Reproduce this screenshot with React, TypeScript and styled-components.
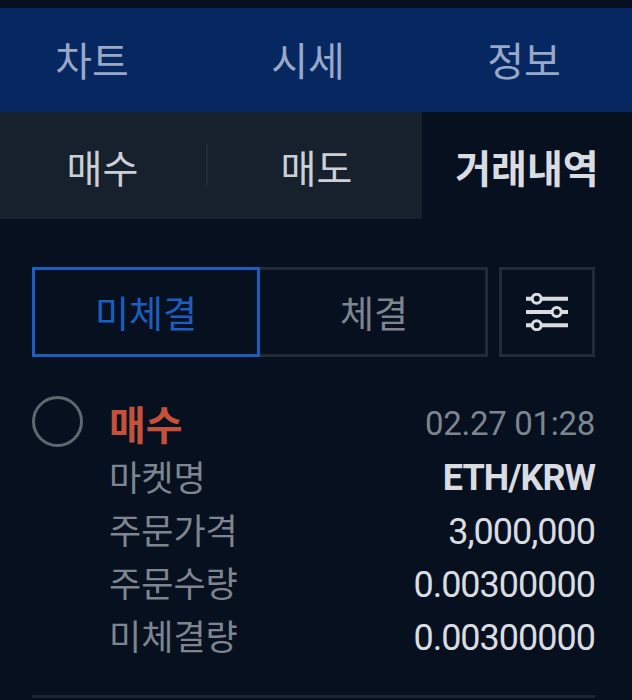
import React, { FC } from 'react';
import styled, { createGlobalStyle } from 'styled-components';

const GlobalStyle = createGlobalStyle`
  html, body {
    margin: 0;
    padding: 0;
    background: #06101f;
  }
  * {
    box-sizing: border-box;
  }
`;

const Page = styled.div`
  width: 632px;
  height: 700px;
  overflow: hidden;
  padding-top: 8px;
  background: #06101f;
  font-family: Roboto, 'Noto Sans CJK KR', sans-serif;
`;

const TopBar = styled.nav`
  display: grid;
  grid-template-columns: 184px 248px 184px;
  height: 104px;
  padding-right: 16px;
  background: #062760;
`;

const TopTab = styled.div`
  display: flex;
  align-items: center;
  justify-content: center;
  padding-bottom: 2px;
  font-size: 40px;
  color: #98a8c8;
`;

const SubBar = styled.div`
  display: grid;
  grid-template-columns: 211px 211px 210px;
  height: 107px;
`;

const SubTab = styled.div<{ $active?: boolean; $divider?: boolean }>`
  position: relative;
  display: flex;
  align-items: center;
  justify-content: center;
  padding-right: ${(p) => (p.$divider ? '6px' : '0')};
  font-size: 39px;
  font-weight: ${(p) => (p.$active ? 700 : 400)};
  color: ${(p) => (p.$active ? '#d9dce1' : '#ccd0d6')};
  background: ${(p) => (p.$active ? '#06101f' : '#17212e')};
  &::after {
    content: '';
    display: ${(p) => (p.$divider ? 'block' : 'none')};
    position: absolute;
    right: 3px;
    top: 32px;
    width: 2px;
    height: 41px;
    background: #222c39;
  }
`;

const Content = styled.div`
  padding: 48px 37px 0 32px;
`;

const FilterRow = styled.div`
  display: flex;
  height: 90px;
`;

const SegmentButton = styled.div<{ $active?: boolean }>`
  display: flex;
  align-items: center;
  justify-content: center;
  width: 228px;
  padding-left: ${(p) => (p.$active ? '0' : '3px')};
  font-size: 37px;
  color: ${(p) => (p.$active ? '#1a5fc0' : '#7e858f')};
  border: 3px solid ${(p) => (p.$active ? '#1a5fc0' : '#222c39')};
  border-left-width: ${(p) => (p.$active ? '3px' : '0')};
`;

const SettingsButton = styled.div`
  display: flex;
  align-items: center;
  justify-content: center;
  width: 96px;
  margin-left: 11px;
  border: 3px solid #222c39;
`;

const Order = styled.div`
  display: flex;
  margin-top: 39px;
`;

const StatusCircle = styled.div`
  flex: none;
  width: 51px;
  height: 51px;
  border: 3px solid #5f6770;
  border-radius: 50%;
`;

const OrderBody = styled.div`
  flex: 1;
  margin-left: 26px;
`;

const OrderHead = styled.div`
  display: flex;
  align-items: center;
  justify-content: space-between;
  height: 54px;
`;

const Side = styled.div`
  font-size: 40px;
  font-weight: 700;
  color: #c4513a;
`;

const Time = styled.div`
  font-size: 33px;
  letter-spacing: -0.3px;
  color: #7e858f;
`;

const Row = styled.div`
  display: flex;
  align-items: center;
  justify-content: space-between;
  height: 53px;
`;

const RowLabel = styled.div`
  font-size: 35px;
  margin-bottom: 2px;
  color: #7e858f;
`;

const RowValue = styled.div<{ $bold?: boolean }>`
  margin-top: ${(p) => (p.$bold ? '2px' : '4px')};
  font-size: 36px;
  font-weight: ${(p) => (p.$bold ? 700 : 400)};
  color: #d9dce1;
  letter-spacing: -1px;
`;

const Divider = styled.div`
  height: 3px;
  margin-top: 33px;
  background: #1a2431;
`;

const SlidersIcon: FC = () => (
  <svg width="42" height="38" viewBox="0 0 42 38" fill="none">
    <path d="M0 5.800h42M0 19h42M0 32.200h42" stroke="#d9dce1" strokeWidth="4" />
    <circle cx="10.700" cy="5.800" r="4.500" fill="#06101f" stroke="#d9dce1" strokeWidth="3" />
    <circle cx="30.700" cy="19" r="4.500" fill="#06101f" stroke="#d9dce1" strokeWidth="3" />
    <circle cx="10.700" cy="32.200" r="4.500" fill="#06101f" stroke="#d9dce1" strokeWidth="3" />
  </svg>
);

const rows = [
  { label: '마켓명', value: 'ETH/KRW', bold: true },
  { label: '주문가격', value: '3,000,000' },
  { label: '주문수량', value: '0.00300000' },
  { label: '미체결량', value: '0.00300000' },
];

const App: FC = () => (
  <Page>
    <GlobalStyle />
    <TopBar>
      <TopTab>차트</TopTab>
      <TopTab>시세</TopTab>
      <TopTab>정보</TopTab>
    </TopBar>
    <SubBar>
      <SubTab $divider>매수</SubTab>
      <SubTab>매도</SubTab>
      <SubTab $active>거래내역</SubTab>
    </SubBar>
    <Content>
      <FilterRow>
        <SegmentButton $active>미체결</SegmentButton>
        <SegmentButton>체결</SegmentButton>
        <SettingsButton>
          <SlidersIcon />
        </SettingsButton>
      </FilterRow>
      <Order>
        <StatusCircle />
        <OrderBody>
          <OrderHead>
            <Side>매수</Side>
            <Time>02.27 01:28</Time>
          </OrderHead>
          {rows.map((row) => (
            <Row key={row.label}>
              <RowLabel>{row.label}</RowLabel>
              <RowValue $bold={row.bold}>{row.value}</RowValue>
            </Row>
          ))}
        </OrderBody>
      </Order>
      <Divider />
    </Content>
  </Page>
);

export default App;
